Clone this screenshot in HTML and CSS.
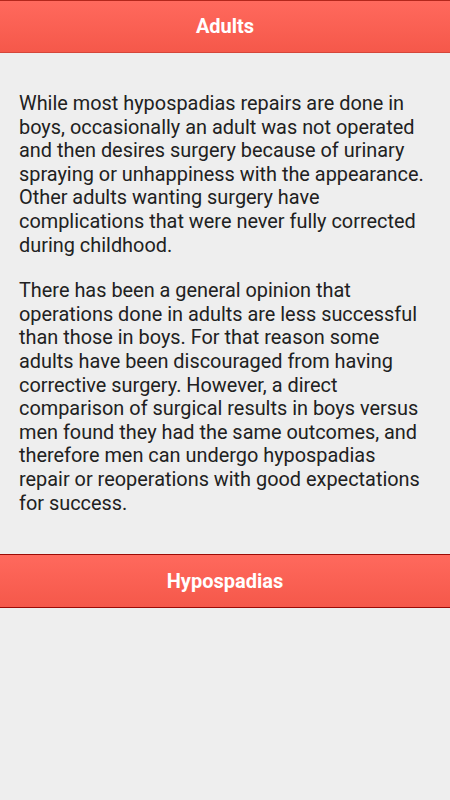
FILE: index.html
```html
<!DOCTYPE html>
<html lang="en">
<head>
  <meta charset="UTF-8" />
  <title>Adults</title>
  <link rel="stylesheet" href="styles.css">
</head>
<body>
  <div class="bar">Adults</div>
  <div class="content">
    <p>While most hypospadias repairs are done in boys, occasionally an adult was not operated and then desires surgery because of urinary spraying or unhappiness with the appearance. Other adults wanting surgery have complications that were never fully corrected during childhood.</p>
    <p>There has been a general opinion that operations done in adults are less successful than those in boys. For that reason some adults have been discouraged from having corrective surgery. However, a direct comparison of surgical results in boys versus men found they had the same outcomes, and therefore men can undergo hypospadias repair or reoperations with good expectations for success.</p>
  </div>
  <div class="bar bar-link">Hypospadias</div>
</body>
</html>
```

FILE: styles.css
```css
body {
  font-family: Roboto, 'Liberation Sans', sans-serif;
  background: #eeeeee;
  margin: 0;
  color: #212121;
}
.bar {
  height: 51px;
  line-height: 51px;
  text-align: center;
  color: white;
  font-weight: bold;
  font-size: 20px;
  background: linear-gradient(#ff695d, #f5584a);
  border-top: 1px solid #b3271c;
  border-bottom: 1px solid #d5463a;
}
.bar-link {
  height: 52px;
  line-height: 52px;
  border-top-color: #9c0a05;
  border-bottom-color: #9c0a05;
}
.content {
  padding: 17px 19px;
}
.content p {
  margin: 22px 0;
  font-size: 19.9px;
  line-height: 23.6px;
}
```
